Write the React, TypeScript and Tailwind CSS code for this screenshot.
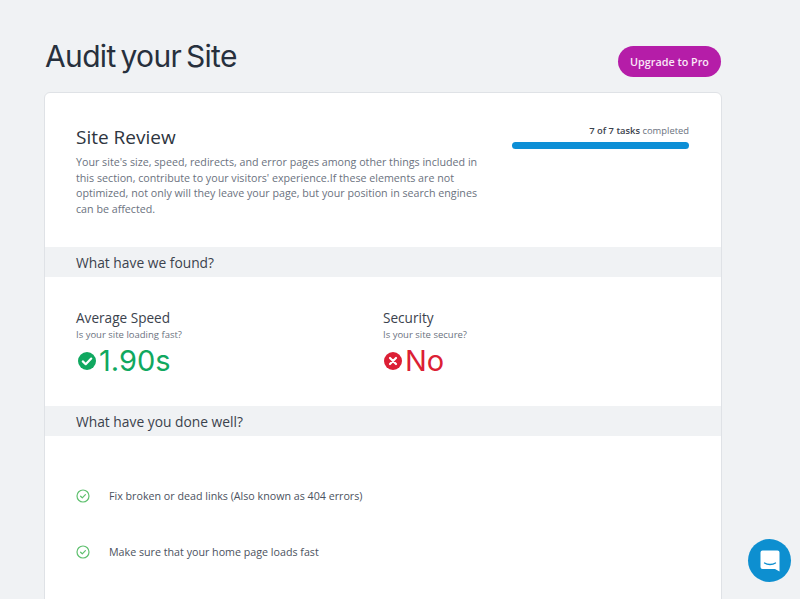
const CheckCircle = ({ color }: { color: string }) => (
  <svg width="20" height="20" viewBox="0 0 20 20">
    <circle cx="10" cy="10" r="9" fill={color} />
    <path d="M5.8 10.4l2.9 2.8 5.500-5.600" fill="none" stroke="#fff" strokeWidth="2.2" strokeLinecap="round" strokeLinejoin="round" />
  </svg>
);

const XCircle = () => (
  <svg width="20" height="20" viewBox="0 0 20 20">
    <circle cx="10" cy="10" r="9" fill="#dc1f35" />
    <path d="M7 7l6 6M13 7l-6 6" fill="none" stroke="#fff" strokeWidth="2.2" strokeLinecap="round" />
  </svg>
);

const OutlineCheck = () => (
  <svg width="14" height="14" viewBox="0 0 14 14" className="shrink-0">
    <circle cx="7" cy="7" r="6" fill="none" stroke="#5fc06f" strokeWidth="1.2" />
    <path d="M4.6 7.2l1.7 1.6 3.1-3.2" fill="none" stroke="#5fc06f" strokeWidth="1.2" strokeLinecap="round" strokeLinejoin="round" />
  </svg>
);

const done = [
  "Fix broken or dead links (Also known as 404 errors)",
  "Make sure that your home page loads fast",
];

const App = () => {
  return (
    <div className="relative h-[599px] overflow-hidden bg-[#f0f2f4] pl-[44px] pr-[78px] pt-[39px] font-['Open_Sans',sans-serif]">
      <div className="flex h-[53px] items-start justify-between pl-[1px] pr-[1px]">
        <h1 className="font-['Inter',sans-serif] text-[30px] leading-[34px] tracking-[-0.65px] [word-spacing:-3px] text-[#27303d]">Audit your Site</h1>
        <button className="mt-[7px] h-[31px] w-[103px] rounded-full bg-[#b51da8] pt-[1px] text-[10.8px] font-semibold text-[#fbe9f8]">
          Upgrade to Pro
        </button>
      </div>

      <div className="rounded-md border border-[#dfe2e6] bg-white">
        <div className="flex h-[154px] justify-between pl-[31px] pr-[32px] pt-[30px]">
          <div className="w-[412px]">
            <h2 className="text-[19px] leading-[28px] text-[#2e3540]">Site Review</h2>
            <p className="mt-[4px] text-[10.7px] leading-[15.6px] text-[#6b7280]">
              Your site's size, speed, redirects, and error pages among other things included in this section, contribute to your visitors' experience.If these elements are not optimized, not only will they leave your page, but your position in search engines can be affected.
            </p>
          </div>
          <div className="w-[177px] pt-[1px]">
            <p className="text-right text-[9.4px] leading-[13px] text-[#6b7280]">
              <span className="font-semibold text-[#3b424d]">7 of 7 tasks</span> completed
            </p>
            <div className="mt-[5px] h-[7px] rounded-full bg-[#0d8fd6]" />
          </div>
        </div>

        <div className="flex h-[30px] items-center bg-[#f0f2f4] pl-[31px] pt-[2px] text-[13.8px] text-[#3b424d]">What have we found?</div>

        <div className="grid h-[129px] grid-cols-[307px_1fr] pl-[31px] pt-[31px]">
          <div>
            <p className="text-[13.6px] leading-[20px] text-[#3b424d]">Average Speed</p>
            <p className="text-[9.5px] leading-[13px] text-[#6b7280]">Is your site loading fast?</p>
            <div className="mt-[2px] flex items-center pl-[1px]">
              <CheckCircle color="#10a860" />
              <span className="ml-[2px] font-['Inter',sans-serif] text-[29px] leading-[36px] text-[#10a860]">1.90s</span>
            </div>
          </div>
          <div>
            <p className="text-[13.6px] leading-[20px] text-[#3b424d]">Security</p>
            <p className="text-[9.5px] leading-[13px] text-[#6b7280]">Is your site secure?</p>
            <div className="mt-[2px] flex items-center">
              <XCircle />
              <span className="ml-[2px] font-['Inter',sans-serif] text-[29px] leading-[36px] text-[#dc1f35]">No</span>
            </div>
          </div>
        </div>

        <div className="flex h-[30px] items-center bg-[#f0f2f4] pl-[31px] pt-[2px] text-[13.8px] text-[#3b424d]">What have you done well?</div>

        <ul className="flex flex-col gap-[38px] pl-[31px] pt-[51px]">
          {done.map((item) => (
            <li key={item} className="flex h-[18px] items-center gap-[19px] text-[10.7px] text-[#4b5260]">
              <OutlineCheck />
              {item}
            </li>
          ))}
        </ul>
        <div className="h-[60px]" />
      </div>

      <button className="absolute left-[748px] top-[539px] flex h-[43px] w-[43px] items-center justify-center rounded-full bg-[#0d8fd0]">
        <svg width="22" height="24" viewBox="0 0 22 24">
          <path d="M3.5 1.5h15a2 2 0 0 1 2 2v19l-4.5-2.5H3.5a2 2 0 0 1-2-2v-14.500a2 2 0 0 1 2-2z" fill="#fff" />
          <path d="M5.500 14c3 2 8 2 11 0" fill="none" stroke="#0d8fd0" strokeWidth="1.3" strokeLinecap="round" />
        </svg>
      </button>
    </div>
  );
};

export default App;
